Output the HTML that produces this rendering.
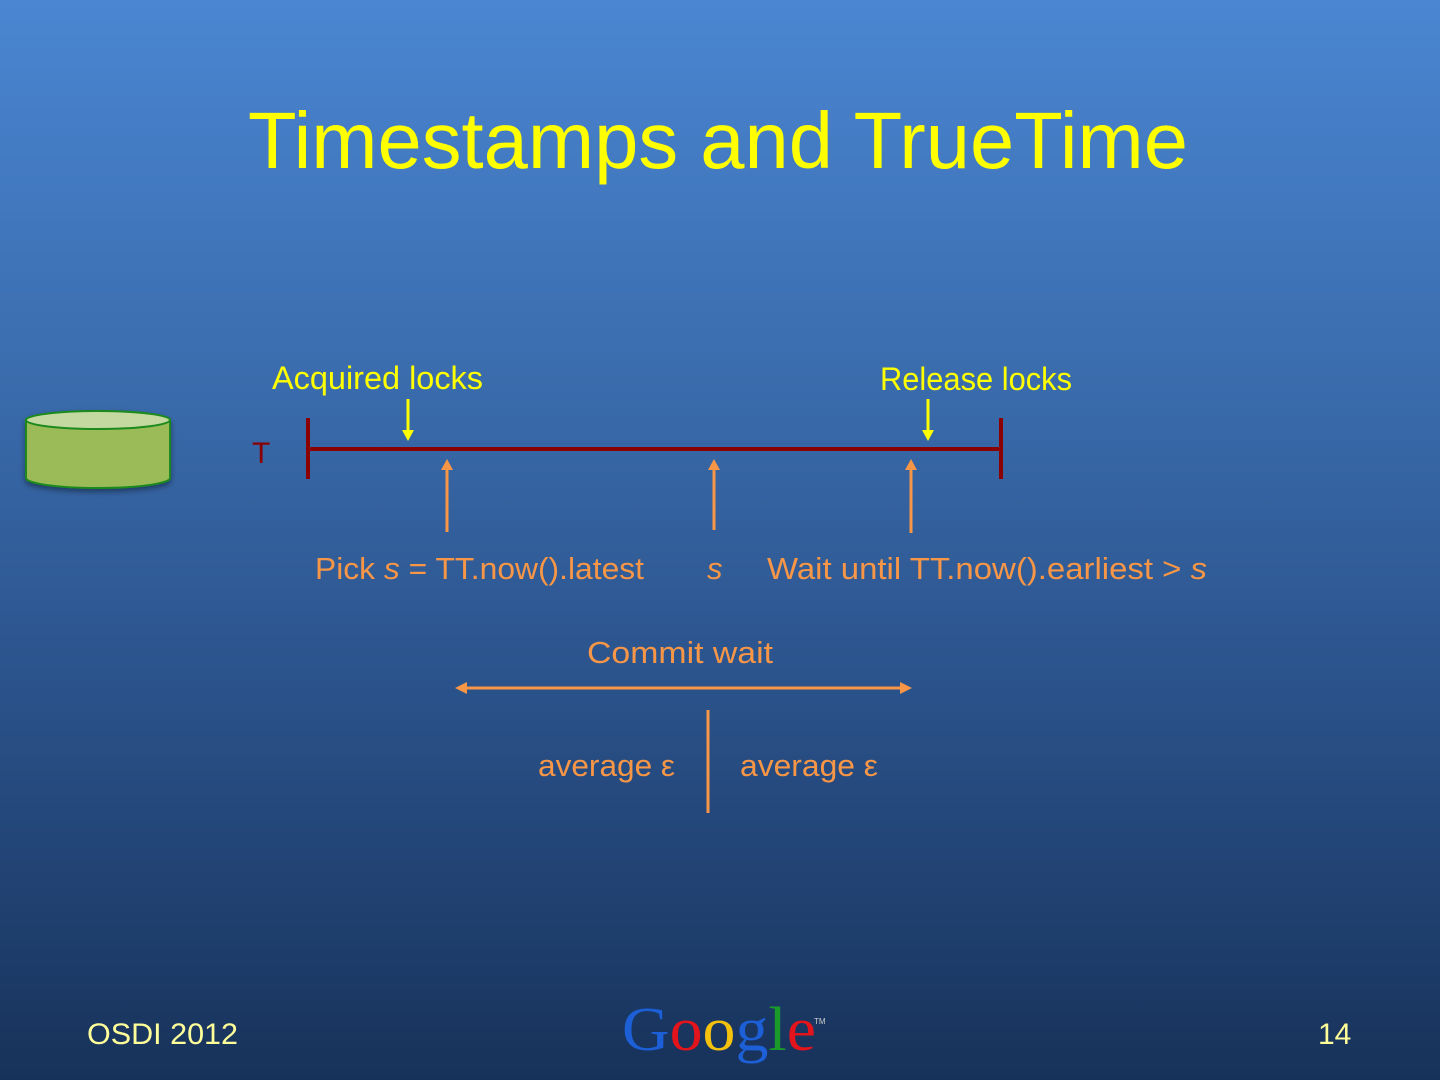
<!DOCTYPE html>
<html><head><meta charset="utf-8"><style>
html,body{margin:0;padding:0}
body{width:1440px;height:1080px;overflow:hidden;background:linear-gradient(#4a86d2 0%,#3a6cad 35%,#2a5189 65%,#17325a 100%)}
svg{position:absolute;left:0;top:0}
text{font-family:"Liberation Sans",sans-serif}
</style></head><body>
<svg width="1440" height="1080" viewBox="0 0 1440 1080">
<defs>
<filter id="sh" x="-20%" y="-20%" width="140%" height="160%"><feDropShadow dx="0" dy="3" stdDeviation="3" flood-color="#000" flood-opacity="0.4"/></filter>
</defs>
<text x="248" y="168" font-size="80" fill="#ffff00" textLength="940" lengthAdjust="spacingAndGlyphs">Timestamps and TrueTime</text>
<g filter="url(#sh)">
<path d="M26,420 L26,478 A72,10 0 0 0 170,478 L170,420 Z" fill="#9bbb59" stroke="#1a8a1a" stroke-width="2"/>
<ellipse cx="98" cy="420" rx="72" ry="9" fill="#c4d9a0" stroke="#1a8a1a" stroke-width="2"/>
</g>
<text x="252" y="463" font-size="30" fill="#8b0000">T</text>
<g stroke="#8b0000" stroke-width="4">
<line x1="308" y1="449" x2="1001" y2="449"/>
<line x1="308" y1="418" x2="308" y2="479"/>
<line x1="1001" y1="418" x2="1001" y2="479"/>
</g>
<text x="272" y="389" font-size="32" fill="#ffff00" textLength="211" lengthAdjust="spacingAndGlyphs">Acquired locks</text>
<text x="880" y="390" font-size="32" fill="#ffff00" textLength="192" lengthAdjust="spacingAndGlyphs">Release locks</text>
<g stroke="#ffff00" stroke-width="3" fill="#ffff00">
<line x1="408" y1="399" x2="408" y2="432"/><path d="M402,430 L414,430 L408,441 Z" stroke="none"/>
<line x1="928" y1="399" x2="928" y2="432"/><path d="M922,430 L934,430 L928,441 Z" stroke="none"/>
</g>
<g stroke="#f79646" stroke-width="3" fill="#f79646">
<line x1="447" y1="532" x2="447" y2="468"/><path d="M441,470 L453,470 L447,459 Z" stroke="none"/>
<line x1="714" y1="530" x2="714" y2="468"/><path d="M708,470 L720,470 L714,459 Z" stroke="none"/>
<line x1="911" y1="533" x2="911" y2="468"/><path d="M905,470 L917,470 L911,459 Z" stroke="none"/>
<line x1="464" y1="688" x2="903" y2="688"/><path d="M455,688 L467,682 L467,694 Z" stroke="none"/><path d="M912,688 L900,682 L900,694 Z" stroke="none"/>
<line x1="708" y1="710" x2="708" y2="813"/>
</g>
<g fill="#f79646" font-size="31">
<text x="315" y="579" textLength="329" lengthAdjust="spacingAndGlyphs">Pick <tspan font-style="italic">s</tspan> = TT.now().latest</text>
<text x="707" y="579" font-style="italic">s</text>
<text x="767" y="579" textLength="440" lengthAdjust="spacingAndGlyphs">Wait until TT.now().earliest &gt; <tspan font-style="italic">s</tspan></text>
<text x="587" y="663" textLength="186" lengthAdjust="spacingAndGlyphs">Commit wait</text>
<text x="538" y="776" textLength="137" lengthAdjust="spacingAndGlyphs">average ε</text>
<text x="740" y="776" textLength="138" lengthAdjust="spacingAndGlyphs">average ε</text>
</g>
<text x="87" y="1044" font-size="30" fill="#ffff99" textLength="151" lengthAdjust="spacingAndGlyphs">OSDI 2012</text>
<text x="1318" y="1044" font-size="30" fill="#ffff99">14</text>
<text x="622" y="1050" font-size="62" font-family="Liberation Serif,serif" textLength="194" lengthAdjust="spacingAndGlyphs" style="font-family:'Liberation Serif',serif"><tspan fill="#1c5fd6">G</tspan><tspan fill="#e3141b">o</tspan><tspan fill="#f4c20d">o</tspan><tspan fill="#1c5fd6">g</tspan><tspan fill="#1a9a2a">l</tspan><tspan fill="#e3141b">e</tspan></text>
<text x="814" y="1024" font-size="8" fill="#ccc">TM</text>
</svg>
</body></html>
